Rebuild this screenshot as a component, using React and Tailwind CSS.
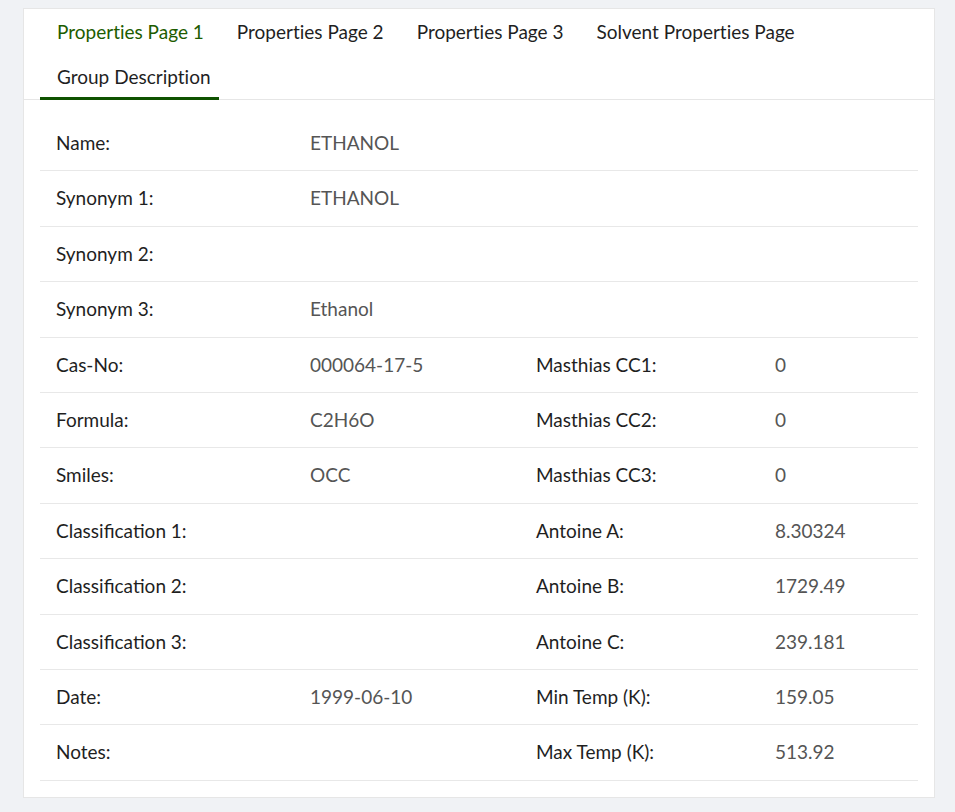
const tabs = [
  { label: 'Properties Page 1', hover: true },
  { label: 'Properties Page 2' },
  { label: 'Properties Page 3' },
  { label: 'Solvent Properties Page' },
  { label: 'Group Description', active: true },
]

const rows = [
  ['Name:', 'ETHANOL'],
  ['Synonym 1:', 'ETHANOL'],
  ['Synonym 2:', ''],
  ['Synonym 3:', 'Ethanol'],
  ['Cas-No:', '000064-17-5', 'Masthias CC1:', '0'],
  ['Formula:', 'C2H6O', 'Masthias CC2:', '0'],
  ['Smiles:', 'OCC', 'Masthias CC3:', '0'],
  ['Classification 1:', '', 'Antoine A:', '8.30324'],
  ['Classification 2:', '', 'Antoine B:', '1729.49'],
  ['Classification 3:', '', 'Antoine C:', '239.181'],
  ['Date:', '1999-06-10', 'Min Temp (K):', '159.05'],
  ['Notes:', '', 'Max Temp (K):', '513.92'],
]

export default function App() {
  return (
    <div className="min-h-[812px] bg-[#f0f2f5] pt-2 pl-[23px] pr-[20px] pb-4 font-['Lato','Open_Sans',sans-serif]">
      <div className="bg-white border border-[#e6e6e6]">
        <div className="flex flex-wrap px-4 border-b border-[#e6e6e6] [font-variant-ligatures:none]">
          {tabs.map(t => (
            <div
              key={t.label}
              className={
                'h-[46px] flex items-center text-[19px] pt-[3px] pl-[17px] border-b-[3px] -mb-px ' +
                (t.active ? 'pr-[8px] border-[#0f5200]' : 'pr-[16px] border-transparent') +
                (t.hover ? ' text-[#1d5c00]' : ' text-[#1f1f1f]')
              }
            >
              {t.label}
            </div>
          ))}
        </div>
        <div className="px-4 pt-[16px] pb-4">
          {rows.map((r, i) => (
            <div key={i} className="grid grid-cols-[254px_226px_239px_1fr] border-b border-[#e8e8e8] text-[19px] leading-[22.4px]">
              <div className="py-4 pl-4 text-[#1f1f1f]">{r[0]}</div>
              <div className="py-4 pl-4 text-[#555555]">{r[1]}</div>
              <div className="py-4 pl-4 text-[#1f1f1f]">{r[2] || ''}</div>
              <div className="py-4 pl-4 text-[#555555]">{r[3] || ''}</div>
            </div>
          ))}
        </div>
      </div>
    </div>
  )
}
